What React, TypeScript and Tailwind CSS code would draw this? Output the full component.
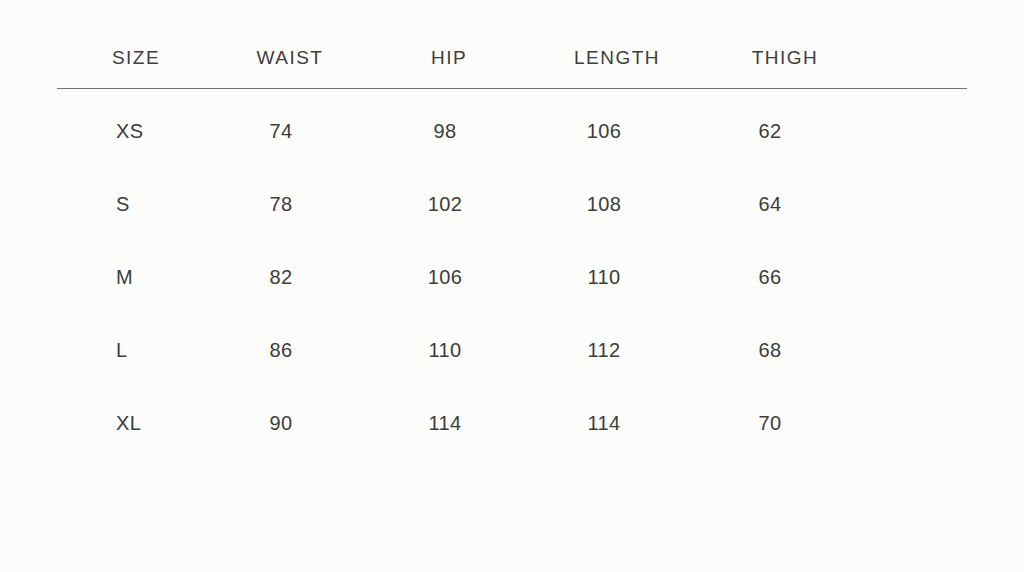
const COLUMNS = [
  { label: "SIZE", width: "w-[146px]", shift: "pl-[12px]" },
  { label: "WAIST", width: "w-[156px]", shift: "pl-[18px]" },
  { label: "HIP", width: "w-[172px]", shift: "pl-[8px]" },
  { label: "LENGTH", width: "w-[146px]", shift: "pl-[26px]" },
  { label: "THIGH", width: "w-[186px]", shift: "pl-[30px]" },
];

const ROWS: string[][] = [
  ["XS", "74", "98", "106", "62"],
  ["S", "78", "102", "108", "64"],
  ["M", "82", "106", "110", "66"],
  ["L", "86", "110", "112", "68"],
  ["XL", "90", "114", "114", "70"],
];

export default function App() {
  return (
    <div
      className="w-[1024px] h-[572px] bg-[#fcfcfa] text-[#3d3d3d] px-[57px] pt-[46px]"
      style={{ fontFamily: '"Liberation Sans", Arial, sans-serif' }}
    >
      {/* header */}
      <div className="flex h-[24px] items-center mb-[18px]">
        {COLUMNS.map((col) => (
          <div
            key={col.label}
            className={`${col.width} ${col.shift} text-center text-[19px] tracking-[1.5px] leading-[24px]`}
          >
            {col.label}
          </div>
        ))}
      </div>
      <div className="w-[910px] h-px bg-[#707070]" />

      {/* rows */}
      <div className="pt-[5px]">
        {ROWS.map((row) => (
          <div key={row[0]} className="flex h-[73px] items-center">
            {row.map((cell, i) => (
              <div
                key={i}
                className={
                  i === 0
                    ? "w-[146px] pl-[59px] text-left text-[20px] leading-[24px] tracking-[0.3px]"
                    : `${COLUMNS[i].width} text-center text-[20px] leading-[24px] tracking-[0.3px]`
                }
              >
                {cell}
              </div>
            ))}
          </div>
        ))}
      </div>
    </div>
  );
}
